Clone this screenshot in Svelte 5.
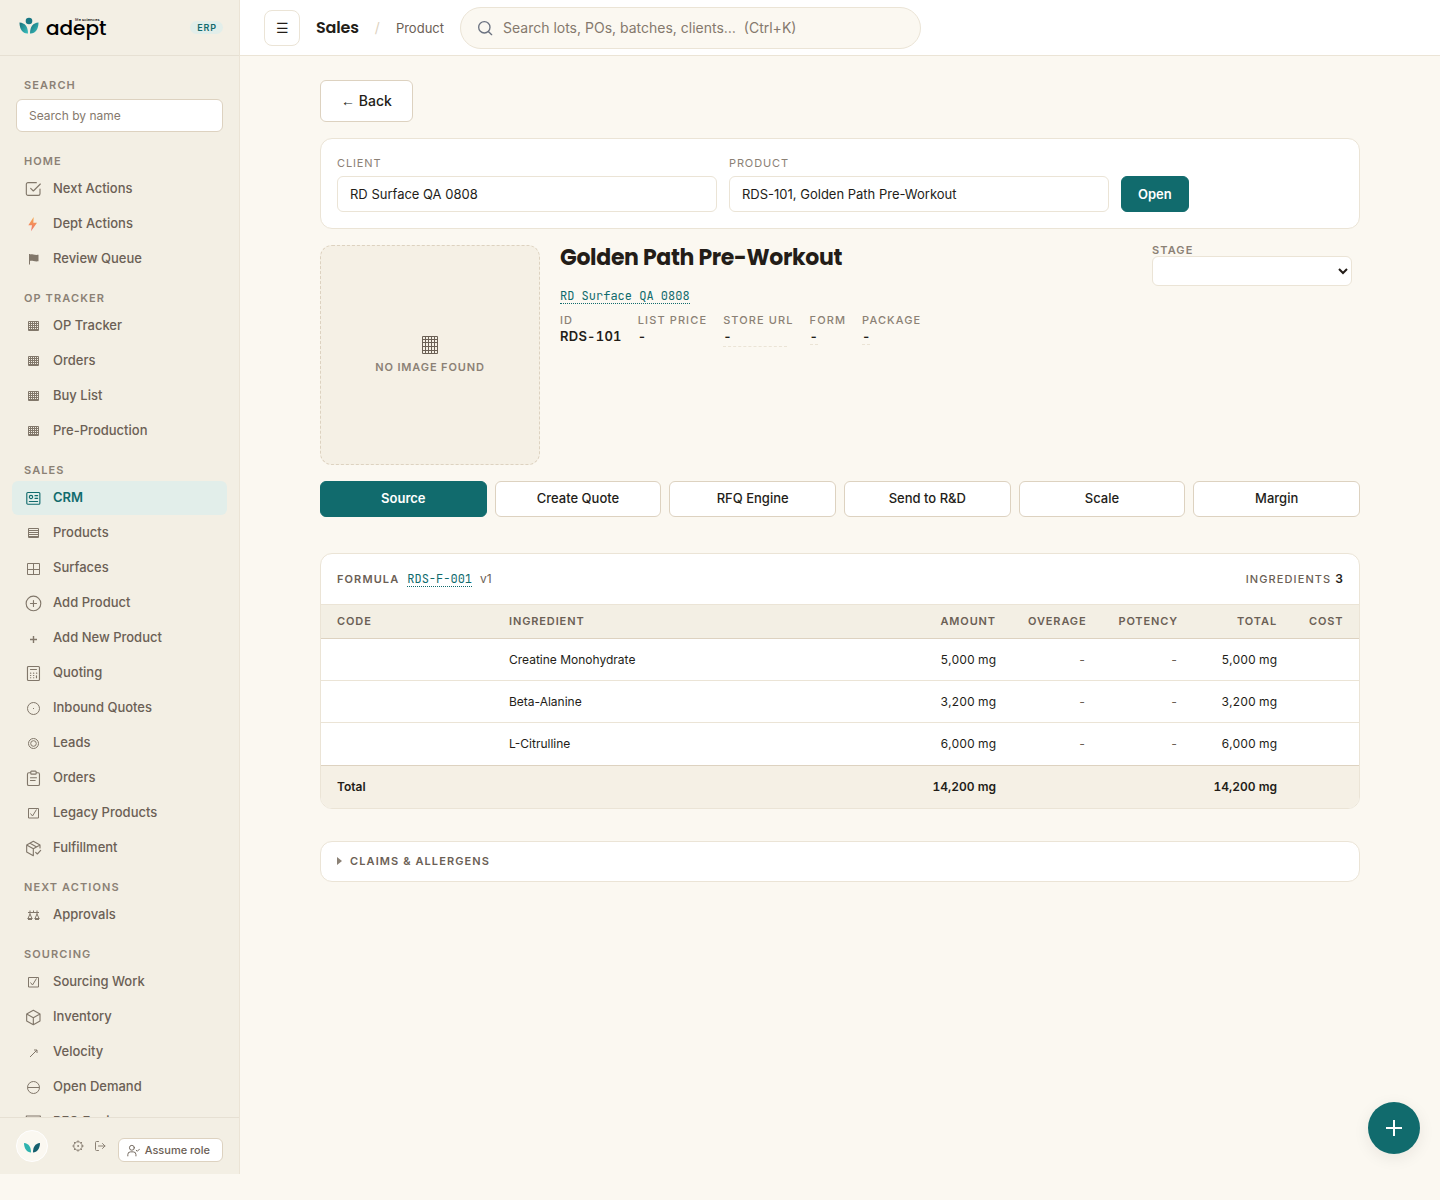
<script lang="ts">
  type Item = { label: string; icon: string; active?: boolean };
  type Group = { title: string; items: Item[] };

  const groups: Group[] = [
    {
      title: "Home",
      items: [
        { label: "Next Actions", icon: "task" },
        { label: "Dept Actions", icon: "bolt" },
        { label: "Review Queue", icon: "flag" },
      ],
    },
    {
      title: "OP Tracker",
      items: [
        { label: "OP Tracker", icon: "grid" },
        { label: "Orders", icon: "grid" },
        { label: "Buy List", icon: "grid" },
        { label: "Pre-Production", icon: "grid" },
      ],
    },
    {
      title: "Sales",
      items: [
        { label: "CRM", icon: "crm", active: true },
        { label: "Products", icon: "lines" },
        { label: "Surfaces", icon: "window" },
        { label: "Add Product", icon: "plusCircle" },
        { label: "Add New Product", icon: "plus" },
        { label: "Quoting", icon: "calc" },
        { label: "Inbound Quotes", icon: "dot" },
        { label: "Leads", icon: "rings" },
        { label: "Orders", icon: "clipboard" },
        { label: "Legacy Products", icon: "ballot" },
        { label: "Fulfillment", icon: "boxCheck" },
      ],
    },
    { title: "Next Actions", items: [{ label: "Approvals", icon: "scales" }] },
    {
      title: "Sourcing",
      items: [
        { label: "Sourcing Work", icon: "ballot" },
        { label: "Inventory", icon: "box" },
        { label: "Velocity", icon: "arrow" },
        { label: "Open Demand", icon: "minusCircle" },
        { label: "RFQ Engine", icon: "mail" },
      ],
    },
  ];

  // outlined set, 24 unit box
  const paths: Record<string, string> = {
    task: "M22.500 12v7a2.500 2.500 0 0 1-2.500 2.500H4.500A2.500 2.500 0 0 1 2 19V5a2.500 2.500 0 0 1 2.500-2.500H17M8.500 11l4 4L23 4.500",
    crm: "M4.200 3.700h16.600a1.500 1.500 0 0 1 1.500 1.500v14.600a1.500 1.500 0 0 1-1.500 1.500H4.200a1.500 1.500 0 0 1-1.500-1.500V5.200a1.500 1.500 0 0 1 1.500-1.500zM9 8a2.500 2.500 0 1 0 0 5 2.500 2.500 0 0 0 0-5zM15 8.500h4M15 12.500h4M6.500 17.200H19",
    plusCircle: "M12.700 1.700a11 11 0 1 0 0 22 11 11 0 0 0 0-22zM12.700 8.200v9M8.200 12.700h9",
    calc: "M5.200 2.200h15a1.500 1.500 0 0 1 1.500 1.500v18a1.500 1.500 0 0 1-1.500 1.500h-15a1.500 1.500 0 0 1-1.500-1.500v-18a1.500 1.500 0 0 1 1.500-1.500zM8.200 6.700h9M8.200 12.200h.5M12.700 12.200h.5M17.200 12.200h.5M8.200 15.700h.5M12.700 15.700h.5M8.200 19.200h.5M12.700 19.200h.5M17.200 16.200v3",
    clipboard: "M8.700 4.200h-3a2 2 0 0 0-2 2v15a2 2 0 0 0 2 2h14a2 2 0 0 0 2-2v-15a2 2 0 0 0-2-2h-3M9.700 1.700h6a1 1 0 0 1 1 1v2.500a1 1 0 0 1-1 1h-6a1 1 0 0 1-1-1V2.700a1 1 0 0 1 1-1zM8.200 11.700h9M8.200 15.700h7",
    boxCheck: "M22.500 12V7.500L12.500 2l-10 5.500v10.500l10 5.500M2.500 7.500l10 5.500 10-5.500M12.500 13v10.500M16 18.500l2.500 2.500 5-5.500M7.500 5l10 5.500",
    box: "M12.500 2l10 5.500v10.500l-10 5.500-10-5.500V7.500zM2.500 7.500l10 5.500 10-5.500M12.500 13v10.500",
    mail: "M2 3h21v17H2zM2.500 6l10 8 10-8",
  };

  // small symbols, 16 unit box
  const symbols: Record<string, string> = {
    grid: "M3.500 3.500h10v9h-10zM5.500 3v10M7.500 3v10M9.500 3v10M11.500 3v10M3 5.500h11M3 7.500h11M3 9.500h11M3 11.500h11",
    lines: "M3.500 3.500h10v9h-10zM3 5.500h11M3 7.500h11M3 9.500h11M3 11.500h11",
    window: "M2.500 3.500h12v11h-12zM8.500 3.500v11M2.500 9.500h12",
    plus: "M8.500 6v7M5 9.500h7",
    dot: "M8.500 2.500a6 6 0 1 0 0 12 6 6 0 0 0 0-12zM8 8.500h1",
    rings: "M8.500 3.500a5 5 0 1 0 0 10 5 5 0 0 0 0-10zM8.500 5.700a2.800 2.800 0 1 0 0 5.600 2.800 2.800 0 0 0 0-5.600z",
    ballot: "M3.500 3.500h10v9.500h-10zM5.500 8.500l2 2.500 4-6.500",
    scales: "M3 5.500h11M8.500 3.500v2.500M5 3.500v3.500l-2 4.500M5 7l2 4.500M12 3.500v3.500l-2 4.500M12 7l2 4.500M2.500 11.500h5M9.500 11.500h5M3 12.500h4M10 12.500h4",
    arrow: "M5 13 12 6M9 6h3v3",
    minusCircle: "M8.500 2.500a6 6 0 1 0 0 12 6 6 0 0 0 0-12zM2.500 8.500h12",
  };

  const actions = ["Source", "Create Quote", "RFQ Engine", "Send to R&D", "Scale", "Margin"];

  const rows = [
    { name: "Creatine Monohydrate", amount: "5,000 mg" },
    { name: "Beta-Alanine", amount: "3,200 mg" },
    { name: "L-Citrulline", amount: "6,000 mg" },
  ];

  let client = $state("RD Surface QA 0808");
  let product = $state("RDS-101, Golden Path Pre-Workout");
  let current = $state("Source");
</script>

<div class="shell">
  <aside class="sidebar">
    <div class="brand">
      <a class="logo" href="#home" aria-label="adept life sciences">
        <svg class="mark" viewBox="0 0 20 18" aria-hidden="true">
          <defs>
            <linearGradient id="leaf" x1="0" y1="0" x2="1" y2="1">
              <stop offset="0" stop-color="#16707a" />
              <stop offset="1" stop-color="#3cc0be" />
            </linearGradient>
          </defs>
          <circle cx="10" cy="4" r="3.300" fill="#187783" />
          <path d="M.500 5.500C6 6 9 9.500 9 16.500 4 17 .500 12.500.500 5.500z" fill="url(#leaf)" />
          <path d="M19.500 5.500C14 6 11 9.500 11 16.500c5 .5 8.500-4 8.500-11z" fill="url(#leaf)" />
        </svg>
        <span class="wordmark">adept<small>life sciences</small></span>
      </a>
      <span class="tag">ERP</span>
    </div>

    <nav>
      <div class="finder">
        <label class="group-title" for="nav-search">Search</label>
        <input id="nav-search" type="text" placeholder="Search by name">
      </div>
      {#each groups as group}
        <section>
          <h2 class="group-title">{group.title}</h2>
          <ul>
            {#each group.items as item}
              <li>
                <a href="#nav" class:active={item.active}>
                  <span class="icon" aria-hidden="true">
                    {#if item.icon === "bolt"}
                      <svg viewBox="0 0 24 24">
                        <defs>
                          <linearGradient id="bolt" x1="0" y1="0" x2="0" y2="1">
                            <stop offset="0" stop-color="#f5a94e" />
                            <stop offset="1" stop-color="#f0716c" />
                          </linearGradient>
                        </defs>
                        <path d="M13 1.500 5 14h5.500L9 23 18 10h-5.500z" fill="url(#bolt)" />
                      </svg>
                    {:else if item.icon === "flag"}
                      <svg viewBox="0 0 16 16">
                        <path d="M4 3h1v.5c2-.8 3.500.8 8.500.3v6.500c-4.500.5-6.500-1-8.500-.3v3.500H4z" fill="currentColor" />
                      </svg>
                    {:else if symbols[item.icon]}
                      <svg class="line symbol" class:bold={item.icon === "plus"} viewBox="0 0 16 16">
                        <path d={symbols[item.icon]} />
                      </svg>
                    {:else}
                      <svg class="line" viewBox="0 0 24 24"><path d={paths[item.icon]} /></svg>
                    {/if}
                  </span>
                  {item.label}
                </a>
              </li>
            {/each}
          </ul>
        </section>
      {/each}
    </nav>

    <div class="account">
      <span class="avatar">
        <svg viewBox="0 0 16 10" aria-hidden="true">
          <path d="M0 0c5 .5 7 4 7 9.500C3 9.500 0 5.500 0 0z" fill="#2fb3ae" />
          <path d="M16 0c-5 .5-7 4-7 9.500 4 0 7-4 7-9.500z" fill="#155f6e" />
        </svg>
      </span>
      <div class="tools">
        <button aria-label="Settings">
          <svg class="line" viewBox="0 0 24 24">
            <circle cx="12" cy="12" r="8.500" />
            <circle cx="12" cy="12" r="1" />
            <path d="M12 1.500v2M12 20.500v2M1.500 12h2M20.500 12h2M4.500 4.500 6 6M18 18l1.500 1.500M4.500 19.500 6 18M18 6l1.500-1.500" />
          </svg>
        </button>
        <button aria-label="Log out">
          <svg class="line" viewBox="0 0 24 24">
            <path d="M9 3H5a2 2 0 0 0-2 2v14a2 2 0 0 0 2 2h4M9 12h13M17 7l5 5-5 5" />
          </svg>
        </button>
      </div>
      <button class="role">
        <svg class="line" viewBox="0 0 24 24" aria-hidden="true">
          <circle cx="9" cy="7" r="4.500" />
          <path d="M1.500 22v-2.500a5 5 0 0 1 5-5h5a5 5 0 0 1 5 5V22M17 11.500l2 2 4-4" />
        </svg>
        Assume role
      </button>
    </div>
  </aside>

  <div class="page">
    <header>
      <button class="menu" aria-label="Toggle menu">☰</button>
      <strong>Sales</strong>
      <span class="slash">/</span>
      <span class="crumb">Product</span>
      <label class="global-search">
        <svg class="line" viewBox="0 0 24 24" aria-hidden="true">
          <circle cx="11" cy="11" r="8.500" />
          <path d="m17.500 17.500 4.500 4.500" />
        </svg>
        <input type="search" aria-label="Search everything" placeholder="Search lots, POs, batches, clients…  (Ctrl+K)">
      </label>
    </header>

    <main>
      <button class="back"><span>←</span> Back</button>

      <form class="card picker" onsubmit={(e) => e.preventDefault()}>
        <div class="field">
          <label for="client">Client</label>
          <input id="client" type="text" bind:value={client}>
        </div>
        <div class="field">
          <label for="product">Product</label>
          <input id="product" type="text" bind:value={product}>
        </div>
        <button class="primary">Open</button>
      </form>

      <section class="hero">
        <div class="photo">
          <svg class="line" viewBox="0 0 18 20" aria-hidden="true">
            <path d="M1.500 1.500h15v17h-15zM4.500 1.500v17M7.500 1.500v17M10.500 1.500v17M13.500 1.500v17M1.500 4.500h15M1.500 7.500h15M1.500 11.500h15M1.500 15.500h15" />
          </svg>
          No image found
        </div>
        <div class="summary">
          <h1>Golden Path Pre-Workout</h1>
          <a class="code" href="#client">RD Surface QA 0808</a>
          <dl>
            <div><dt>ID</dt><dd>RDS-101</dd></div>
            <div><dt>List price</dt><dd class="blank">-</dd></div>
            <div><dt>Store URL</dt><dd class="blank edit wide">-</dd></div>
            <div><dt>Form</dt><dd class="blank edit">-</dd></div>
            <div><dt>Package</dt><dd class="blank edit">-</dd></div>
          </dl>
        </div>
        <div class="stage">
          <label for="stage">Stage</label>
          <select id="stage"><option></option></select>
        </div>
      </section>

      <div class="actions">
        {#each actions as action}
          <button class:primary={action === current} onclick={() => (current = action)}>{action}</button>
        {/each}
      </div>

      <section class="card formula">
        <div class="formula-head">
          <span class="caps">Formula</span>
          <a class="code" href="#formula">RDS-F-001</a>
          <span class="version">v1</span>
          <span class="caps count">Ingredients <b>3</b></span>
        </div>
        <table>
          <thead>
            <tr>
              <th class="c-code">Code</th>
              <th class="c-name">Ingredient</th>
              <th class="num">Amount</th>
              <th class="num c-over">Overage</th>
              <th class="num c-pot">Potency</th>
              <th class="num c-total">Total</th>
              <th class="num c-cost">Cost</th>
            </tr>
          </thead>
          <tbody>
            {#each rows as row}
              <tr>
                <td></td>
                <td>{row.name}</td>
                <td class="num">{row.amount}</td>
                <td class="num none">-</td>
                <td class="num none">-</td>
                <td class="num">{row.amount}</td>
                <td></td>
              </tr>
            {/each}
          </tbody>
          <tfoot>
            <tr>
              <td>Total</td>
              <td></td>
              <td class="num">14,200 mg</td>
              <td></td>
              <td></td>
              <td class="num">14,200 mg</td>
              <td></td>
            </tr>
          </tfoot>
        </table>
      </section>

      <details class="card">
        <summary class="caps">Claims &amp; Allergens</summary>
      </details>
    </main>
  </div>

  <button class="fab" aria-label="Add">
    <svg class="line" viewBox="0 0 24 24"><path d="M12 4v16M4 12h16" /></svg>
  </button>
</div>

<style>
  :global(body) { background: #fbf8f1; }
  * { box-sizing: border-box; }

  .shell {
    --teal: #116b6d;
    --ink: #231d18;
    --muted: #8b8175;
    --line: #ebe4d6;
    --edge: #ddd2c0;
    display: flex;
    min-height: 100vh;
    font-family: Inter, sans-serif;
    font-size: 13px;
    line-height: 20px;
    color: var(--ink);
  }

  button, input, select { font: inherit; color: inherit; }
  button { cursor: pointer; }
  h1, h2, ul, dl, dd { margin: 0; padding: 0; }
  ul { list-style: none; }
  a { text-decoration: none; }
  .line { fill: none; stroke: currentColor; stroke-width: 1.700; stroke-linecap: round; stroke-linejoin: round; }

  /* Sidebar */
  .sidebar {
    display: flex;
    flex-direction: column;
    flex: none;
    width: 240px;
    height: calc(100vh - 26px);
    background: #f3efe4;
    border-right: 1px solid var(--line);
  }
  .brand {
    display: flex;
    align-items: center;
    justify-content: space-between;
    flex: none;
    height: 56px;
    padding: 0 16px 0 19px;
    border-bottom: 1px solid #e6e0d3;
  }
  .logo { display: flex; align-items: center; gap: 7px; color: #000; }
  .mark { width: 20px; height: 18px; margin-bottom: 4px; }
  .wordmark {
    position: relative;
    font-family: Poppins, Lato, sans-serif;
    font-size: 20px;
    font-weight: 500;
    line-height: 24px;
  }
  .wordmark small {
    position: absolute;
    top: 1px;
    left: 29px;
    font-size: 4px;
    line-height: 5px;
    white-space: nowrap;
  }
  .tag {
    padding: 0 6px 0 7px;
    border-radius: 8px;
    background: #e2eeea;
    color: var(--teal);
    font-size: 9px;
    font-weight: 600;
    line-height: 13px;
    letter-spacing: 0.1em;
  }
  nav { flex: 1; min-height: 0; overflow: hidden; padding: 7px 12px 0; }
  .group-title {
    display: block;
    padding: 15px 12px 3px;
    font-size: 11px;
    font-weight: 600;
    line-height: 15px;
    letter-spacing: 0.1em;
    text-transform: uppercase;
    color: var(--muted);
  }
  .finder { padding-bottom: 7px; }
  .finder input {
    display: block;
    width: calc(100% - 8px);
    height: 33px;
    margin: 3px 4px 0;
    padding: 0 12px;
    border: 1px solid var(--edge);
    border-radius: 6px;
    background: #fff;
    font-size: 12px;
  }
  input::placeholder { color: #85796d; opacity: 1; }
  nav ul { display: grid; gap: 1px; }
  nav a {
    display: flex;
    align-items: center;
    gap: 11px;
    height: 34px;
    padding: 0 12px 2px;
    border-radius: 6px;
    font-weight: 500;
    color: #6b6055;
  }
  nav a.active { background: #e2eeea; color: var(--teal); font-weight: 600; }
  .icon {
    display: grid;
    place-items: center;
    width: 18px;
    height: 18px;
    padding-top: 2px;
    color: #81776a;
  }
  .active .icon { color: var(--teal); }
  .icon svg { width: 16px; height: 16px; overflow: visible; }
  .icon .symbol { stroke-width: 1; stroke-linecap: butt; stroke-linejoin: miter; }
  .icon .bold { stroke-width: 1.400; }
  .account {
    display: flex;
    align-items: flex-end;
    flex: none;
    height: 57px;
    padding: 0 16px 12px;
    border-top: 1px solid #e6e0d3;
  }
  .avatar {
    display: grid;
    place-items: center;
    width: 32px;
    height: 32px;
    padding-top: 4px;
    border: 1px solid #fff;
    border-radius: 50%;
    background: #fbf8f1;
  }
  .avatar svg { width: 16px; height: 10px; }
  .tools { display: flex; gap: 10px; margin: 0 auto; padding: 0 0 10px 12px; color: var(--muted); }
  .tools button { display: flex; padding: 0; border: 0; background: none; }
  .tools svg { width: 12px; height: 12px; stroke-width: 2; }
  .role {
    display: flex;
    align-items: center;
    gap: 5px;
    height: 24px;
    padding: 0 12px 0 8px;
    border: 1px solid var(--edge);
    border-radius: 6px;
    background: #fff;
    font-size: 11px;
    font-weight: 500;
    color: #6b6055;
  }
  .role svg { width: 13px; height: 13px; }

  /* Top bar */
  .page { flex: 1; min-width: 0; }
  header {
    display: flex;
    align-items: center;
    gap: 16px;
    height: 56px;
    padding: 0 24px;
    background: #fff;
    border-bottom: 1px solid var(--line);
  }
  .menu {
    width: 36px;
    height: 36px;
    padding: 0;
    border: 1px solid var(--line);
    border-radius: 8px;
    background: #fff;
    font-size: 14px;
  }
  header strong {
    font-family: Poppins, Inter, sans-serif;
    font-size: 16px;
    font-weight: 600;
    letter-spacing: -0.01em;
  }
  .slash { font-size: 14px; color: var(--edge); }
  .crumb { color: #6b6055; }
  .global-search {
    display: flex;
    align-items: center;
    gap: 10px;
    flex: 0 1 461px;
    height: 42px;
    padding: 0 16px;
    border: 1px solid var(--line);
    border-radius: 21px;
    background: #fbf8f1;
  }
  .global-search svg { flex: none; width: 16px; height: 16px; color: #6b7280; stroke-width: 2; }
  .global-search input {
    flex: 1;
    min-width: 0;
    padding: 0;
    border: 0;
    outline: 0;
    background: none;
    font-size: 14px;
    white-space: pre;
  }

  /* Product page */
  main { display: grid; gap: 16px; max-width: 1088px; margin: 0 auto; padding: 24px; }
  .back {
    justify-self: start;
    height: 42px;
    padding: 0 20px;
    border: 1px solid var(--edge);
    border-radius: 6px;
    background: #fff;
    font-size: 14px;
    font-weight: 500;
  }
  .back span { font-family: "Liberation Sans", sans-serif; }
  .card { border: 1px solid var(--line); border-radius: 12px; background: #fff; }
  .picker { display: flex; align-items: flex-end; gap: 12px; padding: 16px; }
  .field { flex: 0 1 380px; }
  .field label, dt, .stage label {
    display: block;
    font-size: 11px;
    line-height: 16px;
    letter-spacing: 0.08em;
    text-transform: uppercase;
    color: var(--muted);
  }
  .field input {
    display: block;
    width: 100%;
    height: 36px;
    margin-top: 5px;
    padding: 0 12px;
    border: 1px solid var(--line);
    border-radius: 6px;
    background: #fff;
  }
  .picker button { height: 36px; padding: 0 16px; border: 1px solid; border-radius: 6px; font-weight: 600; }
  button.primary { background: var(--teal); border-color: var(--teal); color: #fff; font-weight: 600; }
  .hero { display: flex; gap: 20px; }
  .photo {
    display: flex;
    flex-direction: column;
    align-items: center;
    justify-content: center;
    gap: 4px;
    flex: none;
    width: 220px;
    height: 220px;
    border: 1px dashed var(--edge);
    border-radius: 12px;
    background: #f5f0e5;
    font-size: 11px;
    font-weight: 600;
    line-height: 16px;
    letter-spacing: 0.08em;
    text-transform: uppercase;
    color: var(--muted);
  }
  .photo svg { width: 18px; height: 20px; color: #6b6055; stroke-width: 1; stroke-linecap: butt; }
  .summary { flex: 1; }
  h1 {
    margin-bottom: 14px;
    font-family: Poppins, Inter, sans-serif;
    font-size: 22px;
    font-weight: 700;
    line-height: 26px;
    letter-spacing: -0.015em;
  }
  .code {
    display: inline-block;
    border-bottom: 1px dotted var(--teal);
    font-family: "JetBrains Mono", "Liberation Mono", monospace;
    font-size: 12px;
    line-height: 14px;
    color: var(--teal);
  }
  dl { display: flex; gap: 16px; margin-top: 7px; }
  dt, .stage label { font-weight: 500; letter-spacing: 0.1em; }
  dd { font-weight: 600; font-variant-numeric: tabular-nums; line-height: 16px; letter-spacing: 0.02em; }
  dd.blank { width: 8px; }
  dd.edit { border-bottom: 1px dashed var(--line); }
  dd.wide { width: 64px; padding-bottom: 2px; }
  .stage { width: 200px; margin-right: 8px; }
  .stage label { line-height: 11px; font-weight: 600; }
  .stage select {
    display: block;
    width: 100%;
    height: 30px;
    border: 1px solid var(--line);
    border-radius: 6px;
    background: #fff;
  }
  .actions { display: grid; grid-template-columns: repeat(6, 1fr); gap: 8px; }
  .actions button {
    height: 36px;
    padding: 0 0 2px;
    border: 1px solid var(--edge);
    border-radius: 6px;
    background: #fff;
    font-weight: 500;
  }
  .actions button.primary { background: var(--teal); border-color: var(--teal); font-weight: 600; }

  .caps {
    font-size: 11px;
    font-weight: 600;
    letter-spacing: 0.1em;
    text-transform: uppercase;
    color: #6b6055;
  }
  .formula { margin-top: 20px; overflow: hidden; }
  .formula-head { display: flex; align-items: center; gap: 8px; height: 50px; padding: 0 16px; }
  .version { font-size: 12px; color: #6b6055; }
  .count { margin-left: auto; font-weight: 500; }
  .count b { font-size: 12px; font-weight: 600; letter-spacing: 0; color: var(--ink); }
  table { width: 100%; border-collapse: collapse; table-layout: fixed; font-size: 12px; }
  th {
    height: 34px;
    padding: 0 16px 2px;
    border-top: 1px solid var(--line);
    border-bottom: 1px solid var(--edge);
    background: #f3efe4;
    font-size: 11px;
    font-weight: 600;
    letter-spacing: 0.08em;
    text-align: left;
    text-transform: uppercase;
    color: #6b6055;
  }
  td { height: 42px; padding: 0 16px; border-bottom: 1px solid var(--line); }
  tbody tr:last-child td { height: 43px; border-bottom-color: var(--edge); }
  tfoot td { border-bottom: 0; background: #f5f0e5; font-weight: 600; }
  .num { text-align: right; font-variant-numeric: tabular-nums; }
  .none { color: #6b6055; }
  .c-code { width: 172px; }
  .c-name { width: 360px; }
  .c-over { width: 90px; }
  .c-pot { width: 92px; }
  .c-total { width: 99px; }
  .c-cost { width: 66px; }
  details { margin-top: 16px; padding: 0 16px; }
  summary { display: flex; align-items: center; gap: 8px; height: 39px; cursor: pointer; }
  summary::before {
    content: "";
    border: 4px solid transparent;
    border-left: 5px solid var(--muted);
    border-right: 0;
  }

  .fab {
    position: fixed;
    right: 20px;
    bottom: 46px;
    display: grid;
    place-items: center;
    width: 52px;
    height: 52px;
    padding: 0;
    border: 0;
    border-radius: 50%;
    background: var(--teal);
    box-shadow: 0 4px 16px rgba(35, 29, 24, 0.08);
    color: #fff;
  }
  .fab svg { width: 24px; height: 24px; stroke-width: 2; stroke-linecap: butt; }
</style>
